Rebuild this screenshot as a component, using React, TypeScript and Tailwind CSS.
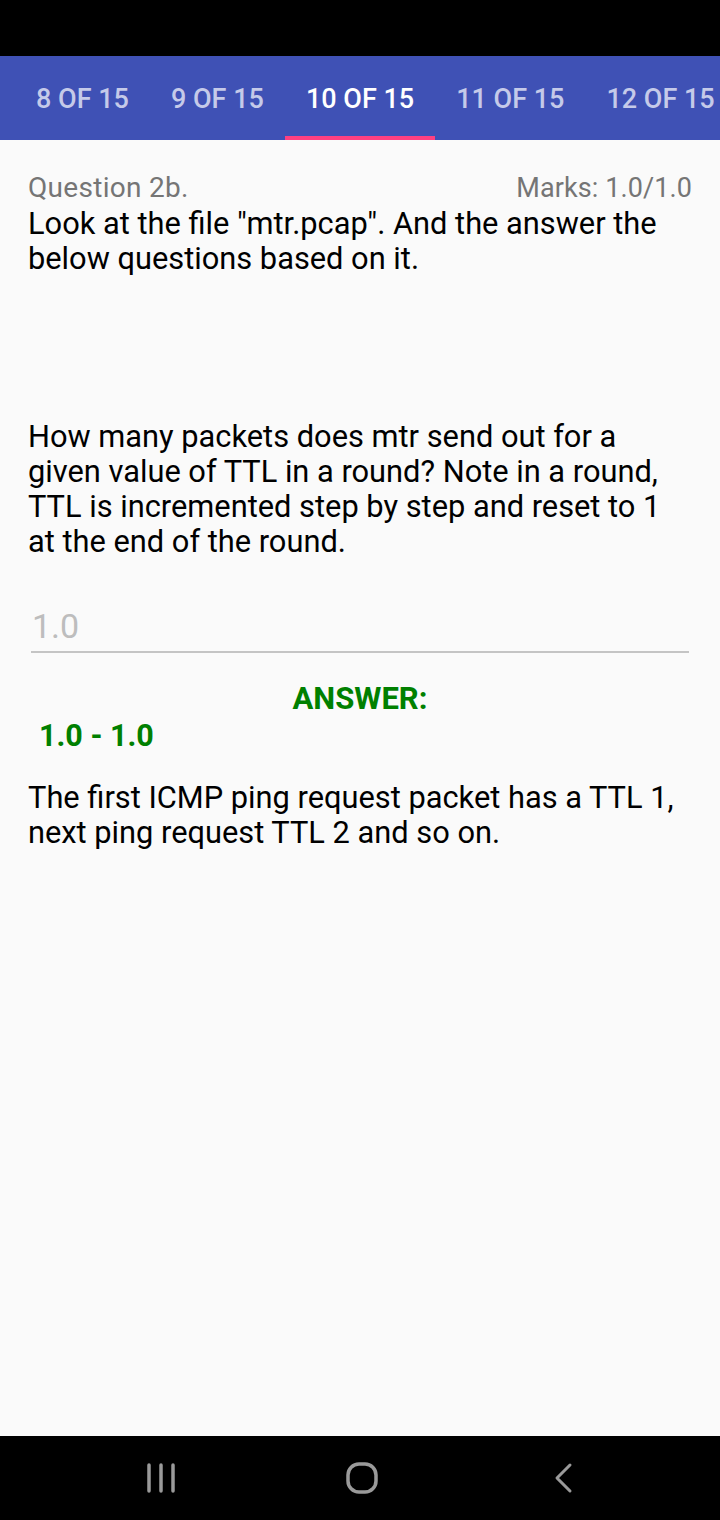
import React from 'react';

const tabs = ['8 OF 15', '9 OF 15', '10 OF 15', '11 OF 15', '12 OF 15'];

const App = () => {
  const active = 2;

  return (
    <div
      className="w-[720px] h-[1520px] flex flex-col bg-[#fafafa] overflow-hidden"
      style={{ fontFamily: 'Roboto, "Noto Sans", sans-serif' }}
    >
      {/* status bar */}
      <div className="h-[56px] bg-black shrink-0" />

      {/* tabs */}
      <div className="h-[84px] bg-[#3f51b5] shrink-0 flex pl-[15px] overflow-hidden">
        {tabs.map((t, i) => (
          <div
            key={t}
            className={`relative shrink-0 h-full flex items-center px-[21px] pt-[2px] text-[27px] font-medium whitespace-nowrap ${
              i === active ? 'text-white' : 'text-[#c5cae9]'
            }`}
          >
            {t}
            {i === active && <div className="absolute left-0 right-0 bottom-0 h-[4px] bg-[#ff4081]" />}
          </div>
        ))}
      </div>

      {/* content */}
      <div className="flex-1 px-[28px] pt-[30px]">
        <div className="flex justify-between items-baseline text-[28px] leading-[35px] text-[#757575]">
          <span className="tracking-[0.3px]">Question 2b.</span>
          <span className="text-[27px] tracking-[0.1px]">Marks: 1.0/1.0</span>
        </div>
        <p className="text-[30.8px] leading-[35px] text-black">
          Look at the file "mtr.pcap". And the answer the below questions based on it.
        </p>

        <p className="mt-[143px] text-[30.8px] leading-[35px] text-black">
          How many packets does mtr send out for a given value of TTL in a round? Note in a round, TTL is incremented step
          by step and reset to 1 at the end of the round.
        </p>

        <div className="mt-[47px] mx-[3px] border-b-2 border-[#c4c4c4] pb-[5px]">
          <span className="block pl-[1px] text-[34px] leading-[40px] text-[#bdbdbd]">1.0</span>
        </div>

        <div className="mt-[27px] text-center text-[31px] leading-[37px] font-bold text-[#008000]">ANSWER:</div>
        <div className="pl-[11px] text-[30.5px] leading-[37px] font-bold text-[#008000]">1.0 - 1.0</div>

        <p className="mt-[26px] text-[30.8px] leading-[35px] text-black">
          The first ICMP ping request packet has a TTL 1, next ping request TTL 2 and so on.
        </p>
      </div>

      {/* nav bar */}
      <div className="h-[84px] bg-black shrink-0 flex items-center pl-[60px]">
        <div className="w-[201px] flex justify-center">
          <svg width="30" height="30" viewBox="0 0 30 30">
            <g stroke="#9a9a9a" strokeWidth="3.5" strokeLinecap="round">
              <line x1="3" y1="2" x2="3" y2="28" />
              <line x1="15" y1="2" x2="15" y2="28" />
              <line x1="27" y1="2" x2="27" y2="28" />
            </g>
          </svg>
        </div>
        <div className="w-[201px] flex justify-center">
          <svg width="32" height="32" viewBox="0 0 32 32">
            <rect x="2" y="2" width="28" height="28" rx="11" fill="none" stroke="#9a9a9a" strokeWidth="3.5" />
          </svg>
        </div>
        <div className="w-[201px] flex justify-center">
          <svg width="22" height="32" viewBox="0 0 22 32">
            <polyline
              points="18,3 5,16 18,29"
              fill="none"
              stroke="#9a9a9a"
              strokeWidth="3"
              strokeLinecap="round"
              strokeLinejoin="round"
            />
          </svg>
        </div>
      </div>
    </div>
  );
};

export default App;
